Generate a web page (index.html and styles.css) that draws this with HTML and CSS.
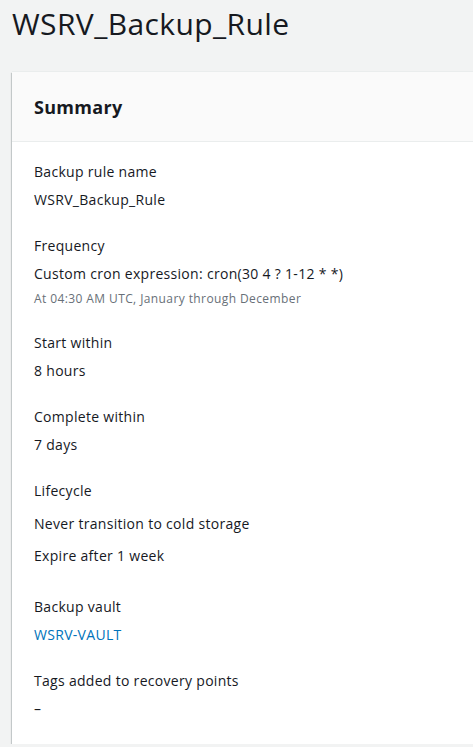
FILE: index.html
```html
<!DOCTYPE html>
<html lang="en">
<head>
<meta charset="utf-8">
<title>WSRV_Backup_Rule</title>
<link rel="stylesheet" href="styles.css">
</head>
<body>
<div class="page">
  <h1 class="title">WSRV_Backup_Rule</h1>
  <div class="card">
    <div class="card-header"><h2>Summary</h2></div>
    <div class="card-body">
      <div class="field">
        <div class="label">Backup rule name</div>
        <div class="value">WSRV_Backup_Rule</div>
      </div>
      <div class="field">
        <div class="label">Frequency</div>
        <div class="value">Custom cron expression: cron(30 4 ? 1-12 * *)</div>
        <div class="hint">At 04:30 AM UTC, January through December</div>
      </div>
      <div class="field">
        <div class="label">Start within</div>
        <div class="value">8 hours</div>
      </div>
      <div class="field">
        <div class="label">Complete within</div>
        <div class="value">7 days</div>
      </div>
      <div class="field lifecycle">
        <div class="label">Lifecycle</div>
        <p class="value">Never transition to cold storage</p>
        <p class="value">Expire after 1 week</p>
      </div>
      <div class="field">
        <div class="label">Backup vault</div>
        <div class="value"><a class="link" href="#">WSRV-VAULT</a></div>
      </div>
      <div class="field">
        <div class="label">Tags added to recovery points</div>
        <div class="value">–</div>
      </div>
    </div>
  </div>
</div>
</body>
</html>
```
FILE: styles.css
```css
html, body {
  margin: 0;
  padding: 0;
  background: #f2f3f3;
  font-family: "Open Sans", "Liberation Sans", sans-serif;
  color: #16191f;
}
.page {
  padding: 0 0 0 12px;
}
.title {
  margin: 0;
  padding: 4px 0 0 0;
  font-size: 30px;
  font-weight: 400;
  line-height: 40px;
  height: 68px;
  letter-spacing: 0.4px;
}
.card {
  background: #fff;
  box-shadow: 0 1px 1px 0 rgba(0,28,36,0.3), -1px 1px 1px 0 rgba(0,28,36,0.15), 0 -1px 0 0 #eaeded;
  margin-right: -20px;
}
.card-header {
  background: #fafafa;
  border-bottom: 1px solid #eaeded;
  padding: 0 22px;
  height: 69px;
  display: flex;
  align-items: center;
}
.card-header h2 {
  margin: 0;
  font-size: 18px;
  font-weight: 700;
  line-height: 22px;
  letter-spacing: 0.3px;
}
.card-body {
  padding: 20px 22px 25px;
  font-size: 14px;
  letter-spacing: 0.3px;
}
.field + .field {
  margin-top: 26px;
}
.label, .value {
  line-height: 20px;
}
.value {
  margin-top: 8px;
}
.hint {
  margin-top: 7px;
  font-size: 12px;
  line-height: 16px;
  color: #687078;
  letter-spacing: 0.4px;
}
.lifecycle .value {
  margin: 13px 0 0;
}
.lifecycle .value + .value {
  margin-top: 12px;
}
.lifecycle + .field {
  margin-top: 31px;
}
.link {
  color: #0073bb;
  text-decoration: none;
}
```
